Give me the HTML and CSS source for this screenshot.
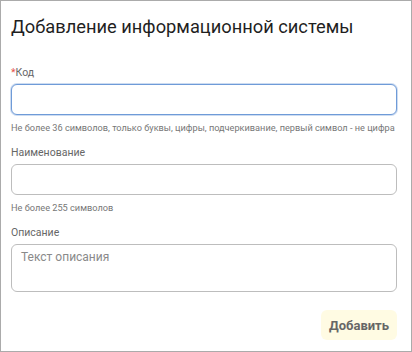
FILE: index.html
```html
<!DOCTYPE html>
<html>
<head>
  <title>Добавление информационной системы</title>
  <link rel="stylesheet" href="styles.css">
</head>
<body>
  <div class="dialog">
    <h1 class="title">Добавление информационной системы</h1>

    <div class="field">
      <label class="label" for="code"><span class="req">*</span>Код</label>
      <input class="input focused" type="text" id="code">
      <div class="hint">Не более 36 символов, только буквы, цифры, подчеркивание, первый символ - не цифра</div>
    </div>

    <div class="field">
      <label class="label" for="name">Наименование</label>
      <input class="input" type="text" id="name">
      <div class="hint">Не более 255 символов</div>
    </div>

    <div class="field">
      <label class="label" for="descr">Описание</label>
      <textarea class="input area" id="descr" placeholder="Текст описания"></textarea>
    </div>

    <div class="actions">
      <button class="btn">Добавить</button>
    </div>
  </div>
</body>
</html>
```

FILE: styles.css
```css
body {
  margin: 0;
  font-family: Roboto, "Liberation Sans", sans-serif;
  background: #fff;
}

.dialog {
  box-sizing: border-box;
  width: 412px;
  height: 352px;
  border: 1px solid #ababab;
  padding: 14px 14px 0 10px;
}

.title {
  margin: 0 0 27px;
  font-size: 18.3px;
  font-weight: 400;
  line-height: 24px;
  color: #1f1f1f;
}

.field {
  display: flex;
  flex-direction: column;
}

.label {
  font-size: 10.5px;
  line-height: 14px;
  color: #666;
  margin-bottom: 4px;
}

.req {
  color: #e5534b;
}

.input {
  box-sizing: border-box;
  width: 386px;
  height: 31px;
  border: 1px solid #bdbdbd;
  border-radius: 6px;
  padding: 5px 9px;
  font-family: inherit;
  font-size: 12px;
  outline: none;
}

.input.focused {
  border-color: #6f9bd8;
  box-shadow: 0 0 0 1px rgba(111, 155, 216, 0.35);
}

.area {
  height: 48px;
  resize: none;
}

.area::placeholder {
  color: #8a8a8a;
}

.hint {
  font-size: 9.2px;
  line-height: 12px;
  color: #777;
  margin: 7px 0 12px;
  white-space: nowrap;
}

.actions {
  display: flex;
  justify-content: flex-end;
  margin-top: 18px;
}

.btn {
  border: none;
  border-radius: 6px;
  background: #fffbe3;
  color: #666;
  font-family: inherit;
  font-size: 13px;
  font-weight: 700;
  padding: 0 8px;
  height: 30px;
}
```
